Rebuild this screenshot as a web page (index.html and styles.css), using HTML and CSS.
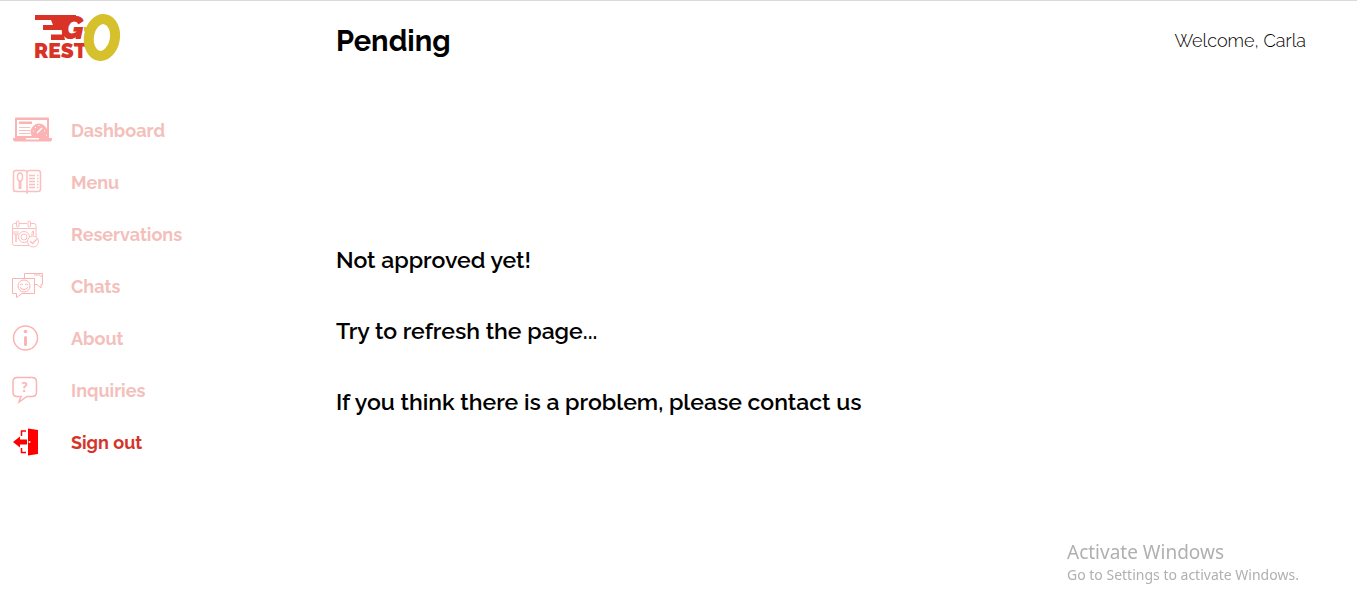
FILE: index.html
```html
<!DOCTYPE html>
<html lang="en">
<head>
<meta charset="utf-8">
<meta name="viewport" content="width=device-width, initial-scale=1">
<title>Go Rest - Pending</title>
<link rel="stylesheet" href="styles.css">
</head>
<body>
<div class="layout">
  <aside class="sidebar">
    <a class="brand" href="#" aria-label="Go Rest home">
      <svg class="logo" viewBox="0 0 88 50" width="88" height="50">
        <path class="logo-red" d="M1 3H42V8H33L30 13 29 18 31 28H17V22.500H28V18H9V13H19L17 8H1z"/>
        <text class="logo-g" x="27" y="27">G</text>
        <text class="logo-rest" x="0" y="46">REST</text>
        <ellipse class="logo-o" cx="68" cy="25.500" rx="13" ry="18.500" transform="rotate(9 68 25)"/>
        <path class="logo-gold" d="M50 15H57V21H53L50 19z"/>
      </svg>
    </a>
    <nav aria-label="Main">
      <ul class="nav">
        <li><a class="nav-link" href="#"><span class="nav-icon">
          <svg width="40" height="26" viewBox="0 0 40 26">
            <path class="solid" fill-rule="evenodd" d="M4 .500H36q1 0 1 1V21H3V1.500q0-1 1-1zM5 3V19H35V3z"/>
            <path class="solid" fill-rule="evenodd" d="M1 21H40v1.500q0 2-2 2H3q-2 0-2-2zM14 21V22.500H27V21zM7 4.500H20v2.500H7z"/>
            <path class="thin" d="M7 10.500H18M7 13.500H18M7 16.500H18"/>
            <path class="solid" d="M20 19.500q-3-5 0-9 3-4 7-4t7 4q2.500 4 0 9z"/>
            <path class="cut" d="M25 16l5-5"/>
            <path class="ticks" d="M21 14h1M23 10l1 1M27 8v1M32 14h1"/>
          </svg></span>Dashboard</a></li>
        <li><a class="nav-link" href="#"><span class="nav-icon">
          <svg width="32" height="26" viewBox="0 0 32 26">
            <path class="line" d="M15 22.500H4q-2.500 0-2.500-2.500V4q0-2.500 2.500-2.500H12q3 0 3 2 0-2 3-2h8q2.500 0 2.500 2.500v16q0 2.500-2.500 2.500H15z"/>
            <path class="line" d="M15 3V25"/>
            <ellipse class="line" cx="8" cy="8" rx="2.500" ry="4"/>
            <path class="handle" d="M8 12v8"/>
            <path class="line" d="M17 6.500H23M25 6.500h1.500M17 9.500H23M25 9.500h1.500M17 12.500H23M25 12.500h1.500M17 15.500H23M25 15.500h1.500M17 18.500H23M25 18.500h1.500"/>
          </svg></span>Menu</a></li>
        <li><a class="nav-link" href="#"><span class="nav-icon">
          <svg width="30" height="28" viewBox="0 0 30 28">
            <path class="thin" d="M17 25.500H3q-2.500 0-2.500-2V5.500q0-2 2-2H4M7 3.500H15M19 3.500h3q2 0 2 2V17M.5 8.500H24"/>
            <rect class="thin" x="4.500" y="1" width="2.500" height="6" rx="1"/>
            <rect class="thin" x="16" y="1" width="2.500" height="6" rx="1"/>
            <circle class="thin" cx="12" cy="17" r="5.500"/>
            <circle class="thin" cx="12" cy="17" r="3"/>
            <path class="line" d="M4 15v7"/><path class="thin" d="M2 11v3q2 3 4 0v-3M4 11v4M20 16v-3q0-2 1.500-2V15"/>
            <circle class="badge" cx="21" cy="21.500" r="5.500"/>
            <path class="line" d="M18 21l2.500 2.500L25 19"/>
          </svg></span>Reservations</a></li>
        <li><a class="nav-link" href="#"><span class="nav-icon">
          <svg width="32" height="28" viewBox="0 0 32 28">
            <path class="thin dark" d="M12.500 6V1.500H30.500V12.500H29V16l-4-3.500H23M22 3H28M29 3v2"/>
            <path class="thin dark" d="M.5 6.500H22.500V21.500H10L4.500 25.500V21.500H.5z"/>
            <circle class="thin dark" cx="12" cy="14" r="6"/>
            <path class="thin dark" d="M8 13q1.500-2 3 0M13 13q1.500-2 3 0M8 15.500q4 4 8 0"/>
          </svg></span>Chats</a></li>
        <li><a class="nav-link" href="#"><span class="nav-icon">
          <svg width="28" height="28" viewBox="0 0 28 28">
            <circle class="line dark" cx="13.500" cy="14" r="12"/>
            <circle class="solid" cx="13.500" cy="7.500" r="1.800"/>
            <rect class="solid" x="12" y="12" width="3" height="10" rx="1.500"/>
          </svg></span>About</a></li>
        <li><a class="nav-link" href="#"><span class="nav-icon">
          <svg width="28" height="28" viewBox="0 0 28 28">
            <path class="line dark" d="M5 1.500H20q4.500 0 4.500 4.500V16q0 4.500-4.500 4.500H15L7 26l2-5.500H5Q1 20.500 1 16V6Q1 1.500 5 1.500z"/>
            <text class="question" x="12.500" y="16">?</text>
          </svg></span>Inquiries</a></li>
        <li><a class="nav-link active" href="#"><span class="nav-icon">
          <svg width="28" height="28" viewBox="0 0 28 28">
            <path class="exit" d="M16 .500l10 1.500V26l-10 1.500zM1 14l7-5.500v3h7v5H8v3z"/>
            <path class="exit-line" d="M14 3H9.500V8M9.500 20v4.500H14"/>
            <circle class="knob" cx="17.500" cy="14" r="1"/>
          </svg></span>Sign out</a></li>
      </ul>
    </nav>
  </aside>
  <main class="content">
    <header class="topbar">
      <h1>Pending</h1>
      <p class="welcome">Welcome, Carla</p>
    </header>
    <section class="message">
      <h2>Not approved yet!</h2>
      <h2>Try to refresh the page...</h2>
      <h2>If you think there is a problem, please contact us</h2>
    </section>
  </main>
</div>
<aside class="watermark">
  <p class="watermark-title">Activate Windows</p>
  <p class="watermark-text">Go to Settings to activate Windows.</p>
</aside>
</body>
</html>
```
FILE: styles.css
```css
* {
  box-sizing: border-box;
}
body {
  margin: 0;
  background: #fff;
  color: #000;
  font-family: Raleway, Lato, sans-serif;
}
h1, h2, p, ul {
  margin: 0;
  padding: 0;
}
.layout {
  display: grid;
  grid-template-columns: 336px 1fr;
  min-height: 100vh;
  border-top: 1px solid #dadada;
}
.brand {
  display: block;
  height: 103px;
  padding: 11px 0 0 34px;
}
.logo {
  display: block;
  overflow: visible;
}
.logo-red, .logo-g, .logo-rest {
  fill: #d93226;
}
.logo-g {
  font: italic 900 32px Raleway, Lato, sans-serif;
}
.logo-rest {
  font: 900 21px Raleway, Lato, sans-serif;
}
.logo-o {
  fill: none;
  stroke: #d6c02c;
  stroke-width: 10;
}
.logo-gold {
  fill: #d6c02c;
}
.nav {
  list-style: none;
}
.nav-link {
  display: flex;
  align-items: center;
  height: 52px;
  padding-left: 12px;
  color: #f4bfbb;
  font-size: 18px;
  font-weight: 700;
  text-decoration: none;
}
.nav-link.active {
  color: #d5342a;
}
.nav-icon {
  display: flex;
  width: 59px;
}
.solid {
  fill: #fcb3b3;
}
.line, .thin, .handle {
  fill: none;
  stroke: #fcbfbf;
  stroke-width: 1.5;
}
.thin {
  stroke-width: 1;
}
.handle {
  stroke-width: 3;
}
.dark {
  stroke: #fcb3b3;
}
.cut, .ticks {
  fill: none;
  stroke: #fff;
  stroke-width: 1.5;
}
.ticks {
  stroke-width: 1;
}
.badge {
  fill: #fff;
  stroke: #fcbfbf;
}
.question {
  fill: #fcb3b3;
  font: 900 14px Lato, sans-serif;
  text-anchor: middle;
}
.exit {
  fill: #f00;
}
.exit-line {
  fill: none;
  stroke: #f00;
  stroke-width: 1.5;
}
.knob {
  fill: #fff;
}
.topbar {
  display: flex;
  align-items: center;
  justify-content: space-between;
  height: 79px;
  padding-right: 51px;
}
h1 {
  font-size: 29px;
  font-weight: 700;
}
.welcome {
  font-size: 18px;
  font-weight: 300;
}
.message {
  display: grid;
  gap: 43px;
  padding-top: 166px;
}
h2 {
  font-size: 23px;
  font-weight: 600;
  line-height: 28px;
}
.watermark {
  position: fixed;
  right: 54px;
  bottom: 29px;
  width: 236px;
  color: #b0b0b0;
  font-family: "Segoe UI", "Noto Sans", sans-serif;
}
.watermark-title {
  font-size: 19px;
  line-height: 26px;
}
.watermark-text {
  font-size: 14px;
  line-height: 20px;
}
```
